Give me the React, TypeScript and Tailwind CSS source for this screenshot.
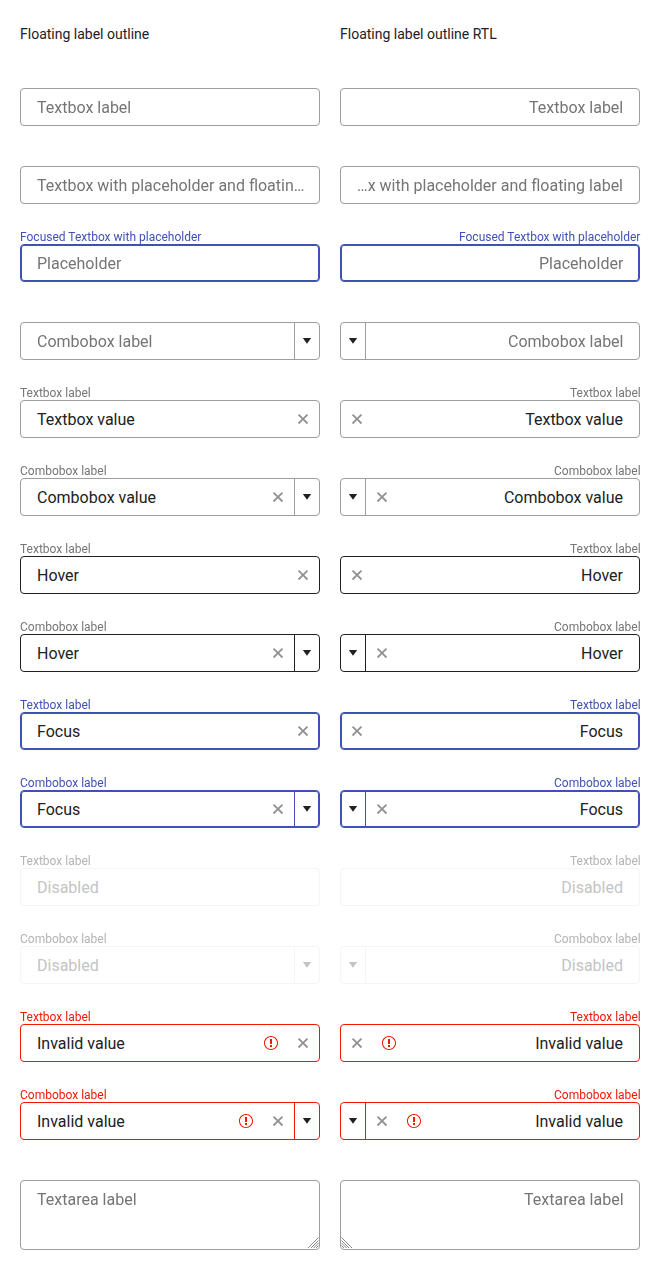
import clsx from 'clsx';

type State = 'normal' | 'hover' | 'focus' | 'disabled' | 'invalid';

interface Field {
  label?: string;
  text: string;
  muted?: boolean;
  combo?: boolean;
  clear?: boolean;
  state?: State;
}

const fields: Field[] = [
  { text: 'Textbox label', muted: true },
  { text: 'Textbox with placeholder and floating label', muted: true },
  { label: 'Focused Textbox with placeholder', text: 'Placeholder', muted: true, state: 'focus' },
  { text: 'Combobox label', muted: true, combo: true },
  { label: 'Textbox label', text: 'Textbox value', clear: true },
  { label: 'Combobox label', text: 'Combobox value', clear: true, combo: true },
  { label: 'Textbox label', text: 'Hover', clear: true, state: 'hover' },
  { label: 'Combobox label', text: 'Hover', clear: true, combo: true, state: 'hover' },
  { label: 'Textbox label', text: 'Focus', clear: true, state: 'focus' },
  { label: 'Combobox label', text: 'Focus', clear: true, combo: true, state: 'focus' },
  { label: 'Textbox label', text: 'Disabled', state: 'disabled' },
  { label: 'Combobox label', text: 'Disabled', combo: true, state: 'disabled' },
  { label: 'Textbox label', text: 'Invalid value', clear: true, state: 'invalid' },
  { label: 'Combobox label', text: 'Invalid value', clear: true, combo: true, state: 'invalid' },
];

const borders: Record<State, string> = {
  normal: 'border-[#9e9e9e]',
  hover: 'border-[#212121]',
  focus: 'border-[#3f51b5] shadow-[inset_0_0_0_1px_#3f51b5]',
  disabled: 'border-[#f5f5f5]',
  invalid: 'border-[#f31700]',
};

const separators: Record<State, string> = {
  normal: 'border-[#9e9e9e]',
  hover: 'border-[#212121]',
  focus: 'border-[#3f51b5]',
  disabled: 'border-[#f5f5f5]',
  invalid: 'border-[#f31700]',
};

const labels: Record<State, string> = {
  normal: 'text-[#757575]',
  hover: 'text-[#757575]',
  focus: 'text-[#3f51b5]',
  disabled: 'text-[#b3b3b3]',
  invalid: 'text-[#f31700]',
};

function Icon({ d, className }: { d: string; className?: string }) {
  return (
    <svg viewBox="0 0 512 512" className={clsx('size-4 shrink-0 fill-current', className)}>
      <path d={d} />
    </svg>
  );
}

const CLEAR =
  'M420 133 379 92 256 215 133 92 92 133 215 256 92 379 133 420 256 297 379 420 420 379 297 256z';
const CARET = 'm122 158 134 184 134-184z';
const ALERT =
  'M256 32C132.3 32 32 132.3 32 256s100.3 224 224 224 224-100.3 224-224S379.7 32 256 32m0 416c-106 0-192-86-192-192S150 64 256 64s192 86 192 192-86 192-192 192m32-64h-64v-64h64zm0-96h-64V128h64z';

function FieldRow({ label, text, muted, combo, clear, state = 'normal' }: Field) {
  return (
    <div className="flex h-[78px] flex-col">
      <div
        className={clsx(
          'h-10 w-fit pt-[25px] text-xs leading-4 will-change-transform rtl:-ms-[0.5px]',
          labels[state],
        )}
      >
        {label}
      </div>
      <div className={clsx('flex h-[38px] items-center rounded-[4px] border bg-white', borders[state])}>
        <div className={clsx('flex min-w-0 flex-1 ps-4 pt-0.5', !clear && !combo && 'pe-3.5')}>
          <span
            className={clsx(
              'min-w-0 truncate text-base leading-6',
              muted && 'will-change-transform',
              muted ? 'text-[#757575]' : state === 'disabled' ? 'text-[#c4c4c4]' : 'text-[#212121]',
            )}
          >
            {text}
          </span>
        </div>
        {state === 'invalid' && <Icon d={ALERT} className="me-4 text-[#f31700]" />}
        {clear && <Icon d={CLEAR} className="me-2 text-[#919191]" />}
        {combo && (
          <div
            className={clsx(
              'flex h-full w-[25px] items-center justify-center border-s',
              separators[state],
              state === 'disabled' ? 'text-[#c4c4c4]' : 'text-[#212121]',
            )}
          >
            <Icon d={CARET} />
          </div>
        )}
      </div>
    </div>
  );
}

function Resizer({ flip }: { flip: boolean }) {
  return (
    <svg
      viewBox="0 0 11 11"
      className={clsx('absolute bottom-px h-[11px] w-[11px]', flip ? 'left-0 -scale-x-100' : 'right-0')}
      fill="none"
      stroke="#6b6b6b"
      strokeWidth="0.8"
    >
      <path d="M0 11 10.5 .5M3 11 10.5 3.5M5.5 11 10.5 6M8 11 10.5 8.5" />
    </svg>
  );
}

function Column({ title, rtl = false }: { title: string; rtl?: boolean }) {
  return (
    <div className="w-[300px]">
      <h1 className="h-7 text-sm leading-7">{title}</h1>
      <div dir={rtl ? 'rtl' : 'ltr'}>
        {fields.map((f, i) => (
          <FieldRow key={i} {...f} />
        ))}
        <div className="relative mt-10 h-[70px] rounded-[4px] border border-[#9e9e9e] px-4 py-[7px] text-base leading-6 text-[#757575]">
          <div className="w-fit will-change-transform rtl:-ms-[0.5px]">Textarea label</div>
          <Resizer flip={rtl} />
        </div>
      </div>
    </div>
  );
}

export default function App() {
  return (
    <div className="flex h-[1270px] w-[660px] gap-5 bg-white px-5 pt-5 font-['Roboto',sans-serif] text-[#212121]">
      <Column title="Floating label outline" />
      <Column title="Floating label outline RTL" rtl />
    </div>
  );
}
